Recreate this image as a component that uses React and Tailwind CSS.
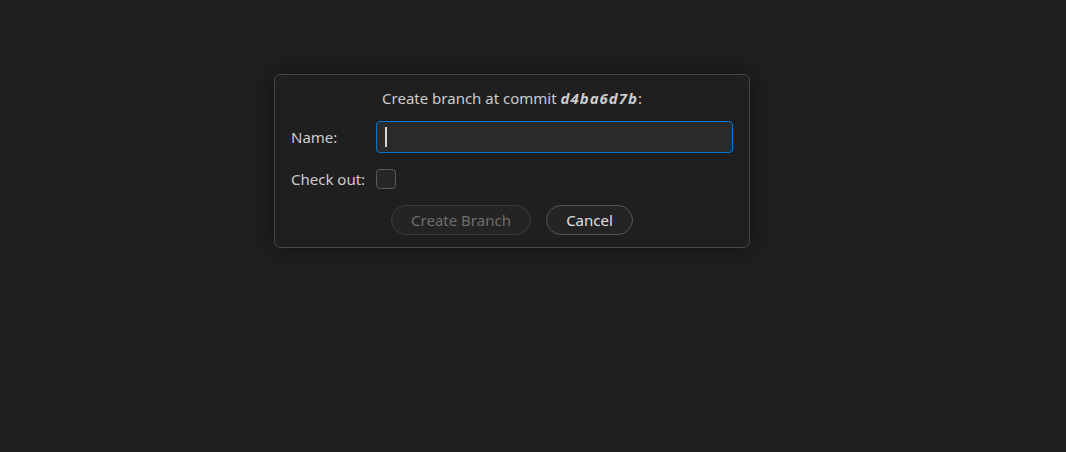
const App = () => {
  return (
    <div className="min-h-[452px] w-full bg-[#1f1f1f] pt-[74px] font-['Noto_Sans','Open_Sans',sans-serif] text-[15px] leading-5 text-[#cccccc]">
      {/* Create branch dialog */}
      <div className="ml-[274px] flex w-[476px] flex-col rounded-md border border-[#454545] bg-[#1f1f1f] px-4 pt-[13px] pb-[12px] shadow-[0_0_24px_rgba(0,0,0,0.45)]">
        <div className="flex h-5 items-center justify-center">
          <span>
            Create branch at commit <span className="font-bold italic tracking-[1px]">d4ba6d7b</span>:
          </span>
        </div>

        <div className="mt-[13px] flex items-center">
          <label className="w-[85px] shrink-0">Name:</label>
          <div className="flex h-8 flex-1 items-center rounded border border-[#0078d4] bg-[#2a2a2a] px-2">
            <span className="h-5 w-[2px] bg-[#d4d4d4]" />
          </div>
        </div>

        <div className="mt-4 flex items-center">
          <label className="w-[85px] shrink-0">Check out:</label>
          <span className="h-5 w-5 rounded-[4px] border border-[#5a5a5a] bg-[#262626]" />
        </div>

        <div className="mt-4 flex justify-center gap-[15px]">
          <button className="h-[30px] w-[140px] rounded-full border border-[#3c3c3c] bg-[#242424] text-[#6e6e6e]">
            Create Branch
          </button>
          <button className="h-[30px] w-[87px] rounded-full border border-[#555555] bg-[#242424] text-[#e0e0e0]">
            Cancel
          </button>
        </div>
      </div>
    </div>
  );
};

export default App;
